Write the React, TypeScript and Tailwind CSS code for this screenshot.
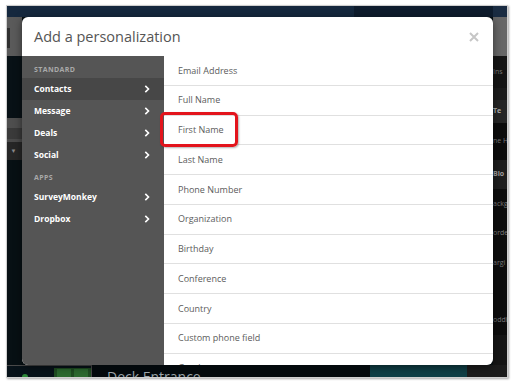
import React from "react";

const standardGroups = ["Contacts", "Message", "Deals", "Social"];
const appGroups = ["SurveyMonkey", "Dropbox"];

const contactFields = [
  "Email Address",
  "Full Name",
  "First Name",
  "Last Name",
  "Phone Number",
  "Organization",
  "Birthday",
  "Conference",
  "Country",
  "Custom phone field",
  "Gender",
];

function Chevron() {
  return (
    <svg width="6" height="8" viewBox="0 0 6 8" className="shrink-0">
      <path d="M1.3 0.9 L4.5 4 L1.3 7.1" fill="none" stroke="white" strokeWidth="1.6" />
    </svg>
  );
}

function NavItem({ label, active }: { label: string; active?: boolean }) {
  return (
    <div
      className={`flex h-[22px] items-center justify-between pl-3 pr-[14px] ${
        active ? "bg-[#474747]" : ""
      }`}
    >
      <span className="text-[8.5px] font-bold text-white">{label}</span>
      <Chevron />
    </div>
  );
}

function SectionLabel({ children }: { children: React.ReactNode }) {
  return (
    <div className="flex h-[12px] items-center pl-3 text-[7px] font-bold tracking-[0.4px] text-[#a9a9a9]">
      {children}
    </div>
  );
}

function LeftStrip() {
  return (
    <div className="flex w-[15px] shrink-0 flex-col">
      <div className="flex h-[39px] items-start bg-[#5a5a5a] pt-[11px]">
        <div className="h-[20px] w-[3px] bg-[#2f2f2f]" />
      </div>
      <div className="h-[62px] bg-[#081116]" />
      <div className="h-[10px] bg-[#4e4e4e]" />
      <div className="h-[11px] bg-[#3a3a3a]" />
      <div className="h-[3px] bg-[#4a4a4a]" />
      <div className="flex h-[18px] items-center justify-center bg-[#262626] pr-[2px] text-[6px] text-[#8a8a8a]">
        ▼
      </div>
      <div className="flex-1 bg-[#071014]" />
    </div>
  );
}

function RightStrip() {
  return (
    <div className="flex w-[14px] shrink-0 flex-col overflow-hidden whitespace-nowrap text-[7px] text-[#7a7a7a]">
      <div className="h-[39px] bg-[#676767]" />
      <div className="flex h-[32px] items-center bg-[#151515]">Ins</div>
      <div className="h-[12px] bg-[#1b1b1b]" />
      <div className="flex h-[23px] items-center bg-[#262626] font-bold text-[#b0b0b0]">Te</div>
      <div className="flex h-[37px] items-center bg-[#0c0c0c]">ne H</div>
      <div className="flex h-[29px] items-center bg-[#1e1e1e] font-bold text-[#a0a0a0]">Blo</div>
      <div className="flex h-[30px] items-center bg-[#0d0d0d]">ackg</div>
      <div className="flex h-[29px] items-center bg-[#0d0d0d]">orde</div>
      <div className="flex h-[30px] items-center bg-[#0d0d0d]">argi</div>
      <div className="h-[27px] bg-[#0d0d0d]" />
      <div className="flex h-[30px] items-center bg-[#0d0d0d]">oddi</div>
      <div className="flex-1 bg-[#151515]" />
    </div>
  );
}

function BottomStrip() {
  return (
    <div className="flex h-[12px] shrink-0">
      <div className="flex w-[85px] items-end border-t border-r border-[#4a4a4a] bg-[#08131a]">
        <div className="mb-[-3px] ml-[15px] h-[6px] w-[6px] rounded-full bg-[#2e8a3a]" />
        <div className="ml-auto flex h-[9px] w-[37px] gap-[3px] bg-[#1f4d22] px-[3px] pt-[1px]">
          <div className="h-full flex-1 bg-[#2c6a2f]" />
          <div className="h-full flex-1 bg-[#2c6a2f]" />
        </div>
      </div>
      <div className="relative w-[278px] overflow-hidden bg-[#03090c]">
        <span className="absolute left-[15px] top-[5px] whitespace-nowrap text-[14px] leading-none text-[#9aa3a8]">
          Deck Entrance
        </span>
      </div>
      <div className="w-[97px] bg-[#0f3f46]" />
      <div className="flex-1 bg-[#1c1c1c]" />
    </div>
  );
}

function Modal() {
  return (
    <div className="relative flex w-[471px] shrink-0 flex-col rounded-[6px] bg-white shadow-[0_2px_8px_rgba(0,0,0,0.5)]">
      <div className="flex h-[39px] shrink-0 items-center justify-between pl-3 pr-[14px]">
        <h2 className="text-[14.5px] font-medium text-[#555]">Add a personalization</h2>
        <svg width="10" height="10" viewBox="0 0 10 10">
          <path d="M1 1 L9 9 M9 1 L1 9" stroke="#c6c6c6" strokeWidth="2" />
        </svg>
      </div>
      <div className="flex min-h-0 flex-1">
        <aside className="w-[142px] shrink-0 rounded-bl-[6px] bg-[#555] pt-2">
          <SectionLabel>STANDARD</SectionLabel>
          <div className="mt-[2px]">
            {standardGroups.map((g) => (
              <NavItem key={g} label={g} active={g === "Contacts"} />
            ))}
          </div>
          <div className="pt-[6px]">
            <SectionLabel>APPS</SectionLabel>
          </div>
          <div className="mt-[2px]">
            {appGroups.map((g) => (
              <NavItem key={g} label={g} />
            ))}
          </div>
        </aside>
        <ul className="min-w-0 flex-1 overflow-hidden rounded-br-[6px]">
          {contactFields.map((f) => (
            <li
              key={f}
              className="flex h-[29.75px] items-center border-b border-[#e0e0e0] pl-[14px] text-[9px] text-[#5c5c5c]"
            >
              {f}
            </li>
          ))}
        </ul>
      </div>
      {/* highlight annotation */}
      <div className="absolute left-[138px] top-[95px] h-[35px] w-[78px] rounded-[5px] border-[3px] border-[#e3141c] shadow-[1px_1px_2px_rgba(0,0,0,0.3)]" />
    </div>
  );
}

export default function App() {
  return (
    <div className="h-[385px] w-[514px] bg-white pl-[6px] pt-[5px] font-['Open_Sans',sans-serif]">
      <div className="w-[502px] border border-[#cfcfcf] shadow-[1px_1px_2px_rgba(0,0,0,0.35)]">
        <div className="flex h-[371px] w-[500px] flex-col overflow-hidden bg-[#071014]">
          <div className="flex h-[11px] shrink-0">
            <div className="w-[347px] bg-[#15283e]" />
            <div className="flex-1 bg-[#0e1c2d]" />
            <div className="w-[14px] bg-[#1a2c42]" />
          </div>
          <div className="flex h-[348px] shrink-0">
            <LeftStrip />
            <Modal />
            <RightStrip />
          </div>
          <BottomStrip />
        </div>
      </div>
    </div>
  );
}
